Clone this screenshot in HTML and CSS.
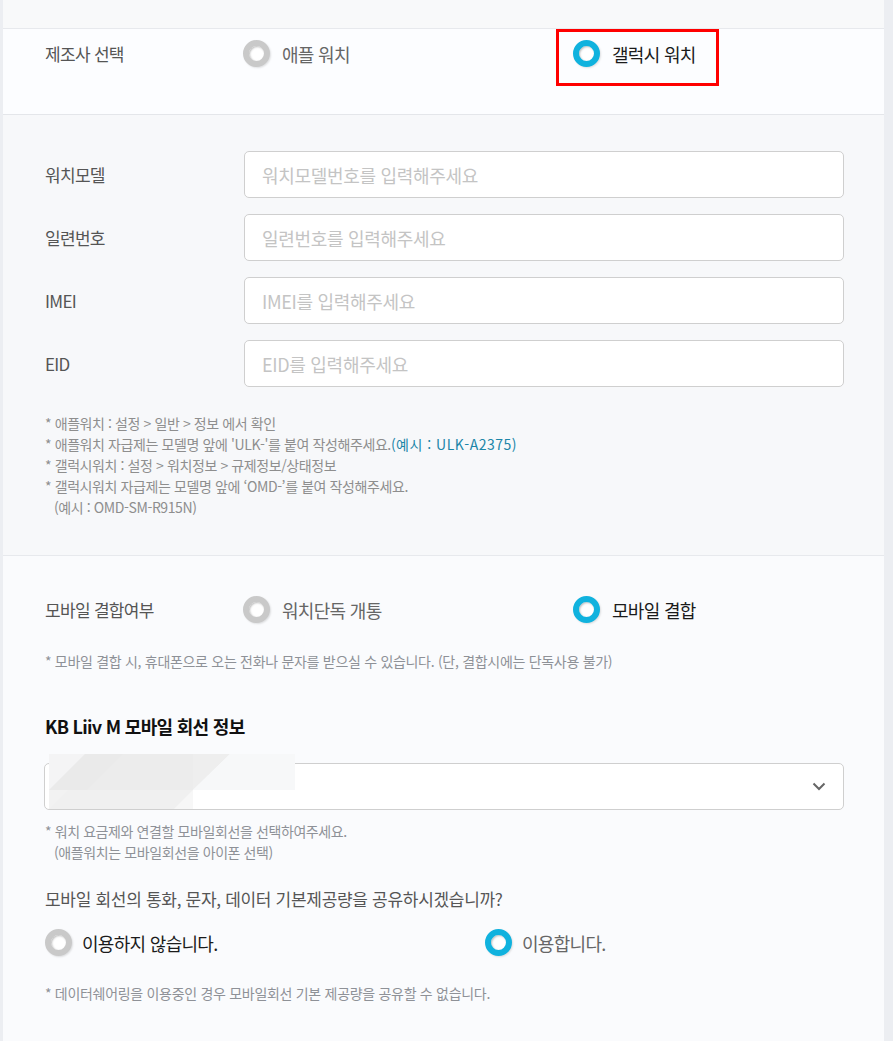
FILE: index.html
```html
<!DOCTYPE html>
<html lang="ko">
<head>
<meta charset="utf-8">
<title>워치 정보</title>
<link rel="stylesheet" href="styles.css">
</head>
<body>
<div class="page">
  <div class="top"></div>

  <div class="row maker">
    <div class="label">제조사 선택</div>
    <div class="opt"><span class="radio"></span><span class="opt-text">애플 워치</span></div>
    <div class="opt opt-marked"><span class="radio on"></span><span class="opt-text sel">갤럭시 워치</span><span class="mark"></span></div>
  </div>

  <div class="info">
    <div class="field"><div class="label">워치모델</div><div class="input ph">워치모델번호를 입력해주세요</div></div>
    <div class="field"><div class="label">일련번호</div><div class="input ph">일련번호를 입력해주세요</div></div>
    <div class="field"><div class="label">IMEI</div><div class="input ph">IMEI를 입력해주세요</div></div>
    <div class="field"><div class="label">EID</div><div class="input ph">EID를 입력해주세요</div></div>
    <ul class="notes">
      <li>* 애플워치 : 설정 &gt; 일반 &gt; 정보 에서 확인</li>
      <li>* 애플워치 자급제는 모델명 앞에 'ULK-'를 붙여 작성해주세요.<span class="blue">(예시 : ULK-A2375)</span></li>
      <li>* 갤럭시워치 : 설정 &gt; 워치정보 &gt; 규제정보/상태정보</li>
      <li>* 갤럭시워치 자급제는 모델명 앞에 ‘OMD-’를 붙여 작성해주세요.</li>
      <li class="indent">(예시 : OMD-SM-R915N)</li>
    </ul>
  </div>

  <div class="mobile">
    <div class="row combine">
      <div class="label">모바일 결합여부</div>
      <div class="opt"><span class="radio"></span><span class="opt-text">워치단독 개통</span></div>
      <div class="opt"><span class="radio on"></span><span class="opt-text sel">모바일 결합</span></div>
    </div>
    <p class="note note-combine">* 모바일 결합 시, 휴대폰으로 오는 전화나 문자를 받으실 수 있습니다. (단, 결합시에는 단독사용 불가)</p>

    <h2 class="title">KB Liiv M 모바일 회선 정보</h2>
    <div class="select">
      <div class="mask">
        <svg width="246" height="55" viewBox="0 0 246 55">
          <rect x="0" y="0" width="246" height="36" fill="#f9fafb"/>
          <polygon points="0,36 36,0 144,0 144,36" fill="#ececec"/>
          <polygon points="0,0 36,0 0,36" fill="#f4f4f5"/>
          <polygon points="36,0 74,0 38,36 0,36" fill="#eaeaea"/>
          <polygon points="144,0 181,0 144,36" fill="#eeeeee"/>
          <polygon points="181,0 246,0 246,36 144,36" fill="#f7f8f9"/>
          <rect x="0" y="36" width="144" height="19" fill="#f2f2f2"/>
          <polygon points="0,55 19,36 144,36 144,55" fill="#f0f0f0"/>
          <polygon points="125,55 144,36 144,55" fill="#f7f7f7"/>
        </svg>
      </div>
      <svg class="chev" width="14" height="9" viewBox="0 0 14 9"><path d="M1.5 1.5 L7 7 L12.5 1.5" fill="none" stroke="#666" stroke-width="2"/></svg>
    </div>
    <ul class="notes notes-select">
      <li>* 워치 요금제와 연결할 모바일회선을 선택하여주세요.</li>
      <li class="indent">(애플워치는 모바일회선을 아이폰 선택)</li>
    </ul>

    <p class="question">모바일 회선의 통화, 문자, 데이터 기본제공량을 공유하시겠습니까?</p>
    <div class="share">
      <div class="opt"><span class="radio"></span><span class="opt-text sel">이용하지 않습니다.</span></div>
      <div class="opt"><span class="radio on"></span><span class="opt-text">이용합니다.</span></div>
    </div>
    <p class="note note-share">* 데이터쉐어링을 이용중인 경우 모바일회선 기본 제공량을 공유할 수 없습니다.</p>
  </div>
</div>
</body>
</html>
```

FILE: styles.css
```css
html, body {
  margin: 0;
  padding: 0;
}
body {
  background: #eceef2;
  font-family: "Noto Sans CJK KR", "Noto Sans", sans-serif;
  color: #555;
}
.page {
  margin-left: 3px;
  width: 881px;
  min-height: 1041px;
  background: #fafbfd;
}
.top {
  height: 28px;
  background: #f8f9fa;
  border-bottom: 1px solid #e7e9ed;
}
.row {
  display: flex;
  align-items: center;
  padding-left: 42px;
}
.label {
  font-size: 17px;
  letter-spacing: -0.7px;
  color: #555;
}
.row .label {
  width: 198px;
  flex: none;
}
.maker {
  height: 85px;
  background: #fcfdff;
  border-bottom: 1px solid #e4e6ea;
  align-items: flex-start;
}
.maker .label, .maker .opt {
  margin-top: 11px;
  height: 27px;
}
.maker .label { line-height: 27px; }
.opt {
  display: flex;
  align-items: center;
  gap: 12px;
  width: 330px;
  flex: none;
  position: relative;
}
.radio {
  width: 15px;
  height: 15px;
  border-radius: 50%;
  border: 6px solid #c9c9c9;
  background: #fff;
  box-shadow: 1px 1px 2px rgba(0, 0, 0, 0.12), inset 1px 1px 2px rgba(0, 0, 0, 0.25);
  flex: none;
}
.radio.on {
  border-color: #10b2de;
}
.opt-text {
  font-size: 18px;
  letter-spacing: -0.7px;
  color: #666;
}
.opt-text.sel {
  color: #1b1b1b;
}
.mark {
  position: absolute;
  left: -17px;
  top: -11px;
  width: 157px;
  height: 51px;
  border: 3px solid #ff0000;
}

.info {
  background: #f7f8fa;
  border-bottom: 1px solid #e7e9ed;
  padding: 36px 40px 37px 42px;
}
.field {
  display: flex;
  align-items: center;
  margin-bottom: 16px;
}
.field .label {
  width: 199px;
  flex: none;
}
.input {
  flex: 1;
  height: 45px;
  border: 1px solid #cfcfcf;
  border-radius: 5px;
  background: #fff;
  box-sizing: content-box;
  padding-left: 17px;
  display: flex;
  align-items: center;
  font-size: 18px;
  letter-spacing: -0.3px;
}
.ph { color: #c4c4c4; }

.notes {
  list-style: none;
  margin: 26px 0 0;
  padding: 0;
  font-size: 14px;
  line-height: 21px;
  color: #8e8e8e;
  letter-spacing: -0.4px;
}
.notes .indent { padding-left: 9px; }
.blue { color: #1c86a8; letter-spacing: 0.5px; }

.mobile {
  padding: 40px 40px 40px 42px;
}
.mobile .row { padding-left: 0; }
.combine .opt { height: 27px; }
.note {
  margin: 0;
  font-size: 14px;
  line-height: 21px;
  color: #8e9197;
  letter-spacing: -0.3px;
}
.note-combine { margin-top: 28px; }
.title {
  margin: 41px 0 0;
  font-size: 18px;
  font-weight: 700;
  color: #111;
  letter-spacing: -0.7px;
  line-height: 26px;
}
.select {
  margin: 24px 0 0 -1px;
  height: 45px;
  border: 1px solid #cfcfcf;
  border-radius: 5px;
  background: #fff;
  position: relative;
}
.mask {
  position: absolute;
  left: 4px;
  top: -10px;
  width: 246px;
  height: 55px;
  line-height: 0;
}
.chev {
  position: absolute;
  right: 17px;
  top: 18px;
}
.notes-select { margin-top: 11px; color: #8e9197; }
.question {
  margin: 23px 0 0;
  font-size: 17px;
  letter-spacing: -0.3px;
  color: #555;
  line-height: 26px;
}
.share {
  display: flex;
  margin-top: 17px;
  height: 27px;
}
.share .opt { width: 440px; gap: 10px; }
.note-share { margin-top: 27px; }
```
